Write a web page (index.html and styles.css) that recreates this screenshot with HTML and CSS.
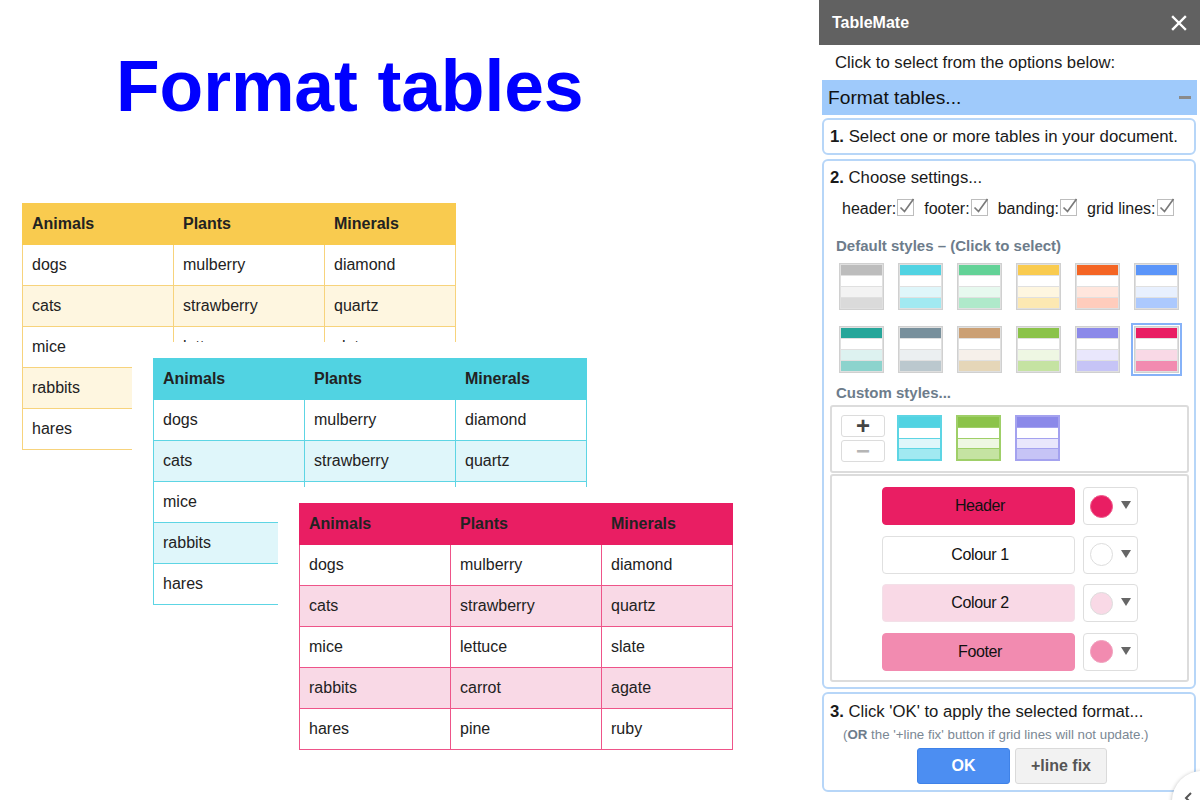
FILE: index.html
```html
<!DOCTYPE html>
<html lang="en">
<head>
<meta charset="utf-8">
<title>TableMate – Format tables</title>
<link rel="stylesheet" href="styles.css">
</head>
<body>
<main class="doc">
  <h1 class="title">Format tables</h1>

  <div class="card card-yellow t-yellow">
    <table class="dt">
      <colgroup><col class="c1"><col class="c2"><col class="c3"></colgroup>
      <tr><th>Animals</th><th>Plants</th><th>Minerals</th></tr>
      <tr><td>dogs</td><td>mulberry</td><td>diamond</td></tr>
      <tr class="band"><td>cats</td><td>strawberry</td><td>quartz</td></tr>
      <tr><td>mice</td><td>lettuce</td><td>slate</td></tr>
      <tr class="band"><td>rabbits</td><td>carrot</td><td>agate</td></tr>
      <tr><td>hares</td><td>pine</td><td>ruby</td></tr>
    </table>
  </div>

  <div class="card card-cyan t-cyan">
    <table class="dt">
      <colgroup><col class="c1"><col class="c2"><col class="c3"></colgroup>
      <tr><th>Animals</th><th>Plants</th><th>Minerals</th></tr>
      <tr><td>dogs</td><td>mulberry</td><td>diamond</td></tr>
      <tr class="band"><td>cats</td><td>strawberry</td><td>quartz</td></tr>
      <tr><td>mice</td><td>lettuce</td><td>slate</td></tr>
      <tr class="band"><td>rabbits</td><td>carrot</td><td>agate</td></tr>
      <tr><td>hares</td><td>pine</td><td>ruby</td></tr>
    </table>
  </div>

  <div class="card card-pink t-pink">
    <table class="dt">
      <colgroup><col class="c1"><col class="c2"><col class="c3"></colgroup>
      <tr><th>Animals</th><th>Plants</th><th>Minerals</th></tr>
      <tr><td>dogs</td><td>mulberry</td><td>diamond</td></tr>
      <tr class="band"><td>cats</td><td>strawberry</td><td>quartz</td></tr>
      <tr><td>mice</td><td>lettuce</td><td>slate</td></tr>
      <tr class="band"><td>rabbits</td><td>carrot</td><td>agate</td></tr>
      <tr><td>hares</td><td>pine</td><td>ruby</td></tr>
    </table>
  </div>
</main>

<aside class="sidebar">
  <div class="titlebar">
    <span class="app-name">TableMate</span>
    <svg class="close" width="16" height="16" viewBox="0 0 16 16"><path d="M2 2 L14 14 M14 2 L2 14" stroke="#fff" stroke-width="2.4" stroke-linecap="square"/></svg>
  </div>
  <p class="intro">Click to select from the options below:</p>
  <div class="accordion">
    <span>Format tables...</span>
    <span class="minus"></span>
  </div>

  <div class="step step1"><b>1.</b> Select one or more tables in your document.</div>

  <div class="step step2">
    <div class="step-head"><b>2.</b> Choose settings...</div>
    <div class="checks">
      <label class="chk">header:<svg class="cb" viewBox="0 0 18 18"><rect x="0.5" y="1.5" width="16" height="16" fill="#fff" stroke="#bdbdbd"/><path d="M3.5 9.5 L7.5 13.5 L16.5 1" fill="none" stroke="#7a7a7a" stroke-width="1.7"/></svg></label>
      <label class="chk">footer:<svg class="cb" viewBox="0 0 18 18"><rect x="0.5" y="1.5" width="16" height="16" fill="#fff" stroke="#bdbdbd"/><path d="M3.5 9.5 L7.5 13.5 L16.5 1" fill="none" stroke="#7a7a7a" stroke-width="1.7"/></svg></label>
      <label class="chk">banding:<svg class="cb" viewBox="0 0 18 18"><rect x="0.5" y="1.5" width="16" height="16" fill="#fff" stroke="#bdbdbd"/><path d="M3.5 9.5 L7.5 13.5 L16.5 1" fill="none" stroke="#7a7a7a" stroke-width="1.7"/></svg></label>
      <label class="chk">grid lines:<svg class="cb" viewBox="0 0 18 18"><rect x="0.5" y="1.5" width="16" height="16" fill="#fff" stroke="#bdbdbd"/><path d="M3.5 9.5 L7.5 13.5 L16.5 1" fill="none" stroke="#7a7a7a" stroke-width="1.7"/></svg></label>
    </div>

    <div class="sub-head">Default styles – (Click to select)</div>
    <div class="swatches">
      <div class="sw t-gray"><i class="h"></i><i class="w"></i><i class="l"></i><i class="d"></i></div>
      <div class="sw t-cyan"><i class="h"></i><i class="w"></i><i class="l"></i><i class="d"></i></div>
      <div class="sw t-green"><i class="h"></i><i class="w"></i><i class="l"></i><i class="d"></i></div>
      <div class="sw t-yellow"><i class="h"></i><i class="w"></i><i class="l"></i><i class="d"></i></div>
      <div class="sw t-orange"><i class="h"></i><i class="w"></i><i class="l"></i><i class="d"></i></div>
      <div class="sw t-blue"><i class="h"></i><i class="w"></i><i class="l"></i><i class="d"></i></div>
      <div class="sw t-teal"><i class="h"></i><i class="w"></i><i class="l"></i><i class="d"></i></div>
      <div class="sw t-slate"><i class="h"></i><i class="w"></i><i class="l"></i><i class="d"></i></div>
      <div class="sw t-tan"><i class="h"></i><i class="w"></i><i class="l"></i><i class="d"></i></div>
      <div class="sw t-lime"><i class="h"></i><i class="w"></i><i class="l"></i><i class="d"></i></div>
      <div class="sw t-purple"><i class="h"></i><i class="w"></i><i class="l"></i><i class="d"></i></div>
      <div class="sw t-pink selected"><i class="h"></i><i class="w"></i><i class="l"></i><i class="d"></i></div>
    </div>

    <div class="sub-head custom-head">Custom styles...</div>
    <div class="custom-box">
      <div class="pm">
        <button class="pm-btn plus">+</button>
        <button class="pm-btn minus-btn">−</button>
      </div>
      <div class="sw cs t-cyan"><i class="h"></i><i class="w"></i><i class="l"></i><i class="d"></i></div>
      <div class="sw cs t-lime"><i class="h"></i><i class="w"></i><i class="l"></i><i class="d"></i></div>
      <div class="sw cs t-purple"><i class="h"></i><i class="w"></i><i class="l"></i><i class="d"></i></div>
    </div>
    <div class="colour-box">
      <div class="crow">
        <button class="cbtn c-header">Header</button>
        <div class="dd"><span class="dot c-header"></span><span class="tri"></span></div>
      </div>
      <div class="crow">
        <button class="cbtn c-one">Colour 1</button>
        <div class="dd"><span class="dot c-one"></span><span class="tri"></span></div>
      </div>
      <div class="crow">
        <button class="cbtn c-two">Colour 2</button>
        <div class="dd"><span class="dot c-two"></span><span class="tri"></span></div>
      </div>
      <div class="crow">
        <button class="cbtn c-footer">Footer</button>
        <div class="dd"><span class="dot c-footer"></span><span class="tri"></span></div>
      </div>
    </div>
  </div>

  <div class="step step3">
    <div class="step-head"><b>3.</b> Click 'OK' to apply the selected format...</div>
    <div class="note">(<b>OR</b> the '+line fix' button if grid lines will not update.)</div>
    <div class="actions">
      <button class="btn-ok">OK</button>
      <button class="btn-fix">+line fix</button>
    </div>
  </div>
</aside>

<div class="toggle">
  <svg width="12" height="14" viewBox="0 0 12 14"><path d="M8 2 L3 7 L8 12" fill="none" stroke="#555" stroke-width="2"/></svg>
</div>
</body>
</html>
```

FILE: styles.css
```css
* { box-sizing: border-box; }

html, body {
  margin: 0;
  padding: 0;
}

body {
  width: 1200px;
  height: 800px;
  overflow: hidden;
  display: flex;
  background: #fff;
  font-family: "Liberation Sans", Arial, sans-serif;
  color: #222;
  position: relative;
}

/* ---------- document area ---------- */
.doc {
  position: relative;
  width: 819px;
  flex: none;
  height: 800px;
}

.title {
  margin: 51px 0 0 116px;
  font-size: 71.5px;
  line-height: 1;
  font-weight: 700;
  color: #0000ff;
  letter-spacing: -0.1px;
}

/* theme colours */
.t-gray   { --h: #bdbdbd; --l: #f3f3f3; --d: #dadada; --b: #d6d6d6; }
.t-cyan   { --h: #51d3e2; --l: #dff6fa; --d: #a1e9f1; --b: #5dd5e4; }
.t-green  { --h: #63d297; --l: #e7f9ef; --d: #afe9ca; --b: #8fdcb3; }
.t-yellow { --h: #f9cb4f; --l: #fef6e0; --d: #fce8b2; --b: #f7d37c; }
.t-orange { --h: #f46524; --l: #ffe6dd; --d: #ffccbc; --b: #f89a70; }
.t-blue   { --h: #5b95f9; --l: #e8f0fe; --d: #acc9fe; --b: #8ab3fb; }
.t-teal   { --h: #26a69a; --l: #ddf2f0; --d: #8cd3cd; --b: #6cc1b9; }
.t-slate  { --h: #78909c; --l: #ebeff1; --d: #bbc8ce; --b: #a3b2ba; }
.t-tan    { --h: #cba074; --l: #f6f0ea; --d: #e5d6b8; --b: #d7bc9c; }
.t-lime   { --h: #8bc34a; --l: #eef7e3; --d: #c5e3a2; --b: #9fcf68; }
.t-purple { --h: #8b89e9; --l: #e9e7fc; --d: #c6c4f6; --b: #a4a2ef; }
.t-pink   { --h: #e91e63; --l: #f9d9e6; --d: #f28bb0; --b: #ee5489; }

/* stacked table "screenshots" on the canvas */
.card {
  position: absolute;
  background: #fff;
  padding: 16px 21px 16px 21px;
}
.card-yellow { left: 1px;   top: 187px; }
.card-cyan   { left: 132px; top: 342px; }
.card-pink   { left: 278px; top: 487px; }

.dt {
  border-collapse: collapse;
  width: 433px;
  table-layout: fixed;
  font-size: 16px;
  border: 1px solid var(--b);
}
.dt .c1, .dt .c2 { width: 151px; }
.dt .c3 { width: 131px; }

.dt th, .dt td {
  height: 41px;
  padding: 0 9px;
  text-align: left;
  vertical-align: middle;
  white-space: nowrap;
}
.dt th {
  background: var(--h);
  border: 1px solid var(--h);
  font-weight: 700;
  color: #222;
}
.dt td {
  border: 1px solid var(--b);
  color: #222;
}
.dt .band td { background: var(--l); }

/* ---------- sidebar ---------- */
.sidebar {
  width: 381px;
  flex: none;
  height: 800px;
  background: #fff;
  display: flex;
  flex-direction: column;
  font-size: 16px;
  color: #1a1a1a;
}

.titlebar {
  height: 45px;
  background: #616161;
  display: flex;
  align-items: center;
  justify-content: space-between;
  padding: 0 13px 0 13px;
  flex: none;
}
.app-name {
  color: #fff;
  font-weight: 700;
  font-size: 16px;
}
.close { display: block; }

.intro {
  margin: 0;
  height: 35px;
  line-height: 36px;
  padding-left: 16px;
  font-size: 16.7px;
  flex: none;
}

.accordion {
  flex: none;
  height: 35px;
  margin: 0 3px;
  background: #9fcafb;
  display: flex;
  align-items: center;
  justify-content: space-between;
  padding: 0 6px 0 6px;
  font-size: 19.2px;
  color: #111;
}
.accordion .minus {
  width: 12px;
  height: 3px;
  background: #8a8a8a;
  margin-right: 0;
}

.step {
  flex: none;
  margin: 3px 4px 0 3px;
  border: 2px solid #b7d6f8;
  border-radius: 6px;
}
.step1 {
  height: 37px;
  line-height: 34px;
  padding-left: 6px;
  font-size: 16.8px;
  white-space: nowrap;
}
.step2 {
  margin-top: 4px;
  height: 530px;
  padding: 7px 5px 0 6px;
}
.step-head { line-height: 20px; font-size: 16.7px; white-space: nowrap; }

.checks {
  display: flex;
  align-items: center;
  gap: 9px;
  margin: 11px 0 0 12px;
  height: 20px;
}
.chk {
  display: flex;
  align-items: center;
  gap: 1px;
  white-space: nowrap;
}
.cb { width: 18px; height: 18px; display: block; margin-top: -4px; }

.sub-head {
  margin: 18px 0 0 6px;
  font-size: 15px;
  line-height: 18px;
  font-weight: 700;
  color: #6d7c8b;
}

.swatches {
  display: grid;
  grid-template-columns: repeat(6, 45px);
  grid-auto-rows: 47px;
  column-gap: 14px;
  row-gap: 16px;
  margin: 8px 0 0 9px;
}

.sw {
  display: flex;
  flex-direction: column;
  gap: 1px;
  padding: 1px;
  background: #e0e0e0;
  border: 1px solid #d0d0d0;
}
.sw i { flex: 1; display: block; }
.sw .h { background: var(--h); }
.sw .w { background: #fff; }
.sw .l { background: var(--l); }
.sw .d { background: var(--d); }
.sw.selected {
  outline: 2px solid #86b2f8;
  outline-offset: 1px;
}

.custom-head { margin-top: 11px; }

.custom-box {
  margin-top: 3px;
  height: 68px;
  border: 2px solid #dcdcdc;
  border-radius: 3px;
  display: flex;
  align-items: flex-start;
  gap: 14px;
  padding: 8px 9px;
}
.pm {
  display: flex;
  flex-direction: column;
  gap: 3px;
  width: 44px;
  margin-right: -2px;
}
.pm-btn {
  height: 22px;
  border: 1px solid #dcdcdc;
  border-radius: 3px;
  background: #fff;
  padding: 0;
  font-family: "Liberation Sans", Arial, sans-serif;
  font-size: 24px;
  line-height: 18px;
  font-weight: 700;
}
.plus { color: #444; }
.minus-btn { color: #b5b5b5; }

.sw.cs {
  width: 45px;
  height: 46px;
  border: 1px solid var(--b);
  background: var(--b);
}

.colour-box {
  margin-top: 1px;
  height: 208px;
  border: 2px solid #dcdcdc;
  border-radius: 3px;
  display: flex;
  flex-direction: column;
  align-items: center;
  gap: 10.5px;
  padding-top: 11px;
}
.crow {
  display: flex;
  gap: 8px;
  height: 38px;
}
.cbtn {
  width: 193px;
  height: 38px;
  border: 1px solid #e0e0e0;
  border-radius: 4px;
  font-family: "Liberation Sans", Arial, sans-serif;
  font-size: 16px;
  letter-spacing: -0.4px;
  color: #111;
  padding: 0 0 0 4px;
}
.cbtn.c-header { background: #e91e63; border-color: #e91e63; }
.cbtn.c-one    { background: #fff; }
.cbtn.c-two    { background: #f9d9e6; border-color: #f3e0e8; }
.cbtn.c-footer { background: #f28bb0; border-color: #f28bb0; }

.dd {
  width: 55px;
  height: 38px;
  border: 1px solid #dedede;
  border-radius: 4px;
  display: flex;
  align-items: center;
  padding-left: 6px;
  gap: 8px;
}
.dot {
  width: 23px;
  height: 23px;
  border-radius: 50%;
  border: 1px solid #ddd;
}
.dot.c-header { background: #e91e63; border-color: #ee5a8a; }
.dot.c-one    { background: #fff; }
.dot.c-two    { background: #f9d9e6; }
.dot.c-footer { background: #f28bb0; border-color: #f0a0bd; }
.tri {
  width: 0;
  height: 0;
  border-left: 5px solid transparent;
  border-right: 5px solid transparent;
  border-top: 8px solid #666;
  margin-top: -2px;
}

.step3 {
  height: 100px;
  padding: 8px 0 0 6px;
}
.note {
  margin: 5px 0 0 13px;
  font-size: 13.3px;
  line-height: 16px;
  color: #7b8894;
}
.note b { color: #6d7c8b; }
.actions {
  display: flex;
  justify-content: center;
  gap: 5px;
  margin: 5px 0 0 0;
}
.btn-ok, .btn-fix {
  height: 36px;
  border-radius: 3px;
  font-family: "Liberation Sans", Arial, sans-serif;
  font-size: 16px;
  font-weight: 700;
  padding: 0;
}
.btn-ok {
  width: 93px;
  background: #4c8ef2;
  border: 1px solid #3f82e8;
  color: #fff;
}
.btn-fix {
  width: 92px;
  background: #f2f2f2;
  border: 1px solid #dadada;
  color: #555;
}

/* side-panel toggle (overlay at the corner) */
.toggle {
  position: absolute;
  left: 1172px;
  top: 771px;
  width: 60px;
  height: 60px;
  border-radius: 50%;
  background: #fff;
  box-shadow: 0 1px 4px rgba(0,0,0,0.3);
  padding: 20px 0 0 11px;
}
.toggle svg { display: block; }
```
